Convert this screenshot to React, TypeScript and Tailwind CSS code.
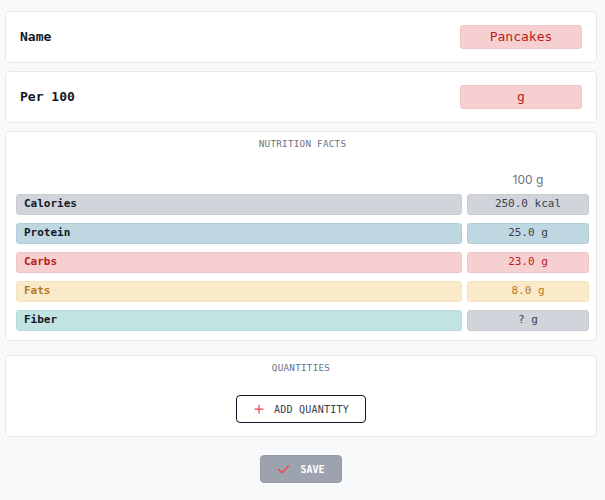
import { FC } from "react";

const mono = { fontFamily: '"DejaVu Sans Mono", "Liberation Mono", monospace' };

type Nutrient = {
  label: string;
  value: string;
  labelClass: string;
  valueClass: string;
};

const nutrients: Nutrient[] = [
  {
    label: "Calories",
    value: "250.0 kcal",
    labelClass: "bg-[#d1d5db] text-[#111827] border-[#c9cdd3]",
    valueClass: "bg-[#d1d5db] text-[#374151] border-[#c9cdd3]",
  },
  {
    label: "Protein",
    value: "25.0 g",
    labelClass: "bg-[#bfd7e0] text-[#111827] border-[#b3ced8]",
    valueClass: "bg-[#bfd7e0] text-[#374151] border-[#b3ced8]",
  },
  {
    label: "Carbs",
    value: "23.0 g",
    labelClass: "bg-[#f6d0d0] text-[#b91c1c] border-[#f0c4c4]",
    valueClass: "bg-[#f6d0d0] text-[#b91c1c] border-[#f0c4c4]",
  },
  {
    label: "Fats",
    value: "8.0 g",
    labelClass: "bg-[#fbeac9] text-[#b7791f] border-[#f6e2bc]",
    valueClass: "bg-[#fbeac9] text-[#b7791f] border-[#f6e2bc]",
  },
  {
    label: "Fiber",
    value: "? g",
    labelClass: "bg-[#c1e3e1] text-[#111827] border-[#b6dbd9]",
    valueClass: "bg-[#d1d5db] text-[#374151] border-[#c9cdd3]",
  },
];

const FieldRow: FC<{ label: string; value: string; bold?: boolean }> = ({
  label,
  value,
  bold,
}) => (
  <div className="bg-white border border-[#e5e7eb] rounded-[4px] flex items-center justify-between pl-[14px] pr-[14px] py-[13px]">
    <span className={`text-[13px] text-[#111827] ${bold ? "font-bold" : "font-semibold"}`}>
      {label}
    </span>
    <div className="w-[122px] h-[24px] rounded-[3px] bg-[#f6d0d0] border border-[#f0c6c6] flex items-center justify-center text-[13px] text-[#b91c1c]">
      {value}
    </div>
  </div>
);

const App: FC = () => {
  return (
    <div
      className="min-h-[500px] bg-[#f8f9fb] pt-[11px] pl-[5px] pr-[8px] pb-4 flex flex-col"
      style={mono}
    >
      <div className="flex flex-col gap-[8px]">
        <FieldRow label="Name" value="Pancakes" bold />
        <FieldRow label="Per 100" value="g" />

        <section className="bg-white border border-[#e5e7eb] rounded-[4px] pl-[10px] pr-[7px] pt-[6px] pb-[9px]">
          <h3 className="text-center text-[9.3px] text-[#6b7280] tracking-wide leading-[12px]">
            NUTRITION FACTS
          </h3>
          <div className="flex justify-end mt-[22px] mb-[6px]">
            <span
              className="w-[122px] text-center text-[12px] text-[#6b7280] leading-[16px]"
              style={{ fontFamily: '"Inter", "Noto Sans", sans-serif' }}
            >
              100 g
            </span>
          </div>
          <div className="flex flex-col gap-[8px]">
            {nutrients.map((n) => (
              <div key={n.label} className="flex gap-[5px] h-[21px]">
                <div
                  className={`flex-1 flex items-center pl-[7px] rounded-[3px] border text-[11px] font-bold ${n.labelClass}`}
                >
                  {n.label}
                </div>
                <div
                  className={`w-[122px] flex items-center justify-center rounded-[3px] border text-[11px] ${n.valueClass}`}
                >
                  {n.value}
                </div>
              </div>
            ))}
          </div>
        </section>
      </div>

      <section className="mt-[14px] bg-white border border-[#e5e7eb] rounded-[4px] pt-[6px] pb-[13px] flex flex-col items-center">
        <h3 className="text-[9.3px] text-[#6b7280] tracking-wide leading-[12px]">
          QUANTITIES
        </h3>
        <button className="mt-[21px] w-[130px] h-[28px] border border-[#111827] rounded-[4px] bg-white flex items-center justify-center gap-[9px] text-[10px] text-[#374151] tracking-wide">
          <svg
            width="12"
            height="12"
            viewBox="0 0 24 24"
            fill="none"
            stroke="#ef4444"
            strokeWidth="2.5"
            strokeLinecap="round"
          >
            <path d="M12 4v16" />
            <path d="M4 12h16" />
          </svg>
          <span>ADD QUANTITY</span>
        </button>
      </section>

      <div className="flex justify-center mt-[18px]">
        <button className="w-[82px] h-[28px] rounded-[4px] bg-[#9ca3af] border border-[#959ba6] flex items-center justify-center gap-[10px] text-[10px] font-bold text-white">
          <svg
            width="13"
            height="13"
            viewBox="0 0 24 24"
            fill="none"
            stroke="#ef4444"
            strokeWidth="2.5"
            strokeLinecap="round"
            strokeLinejoin="round"
          >
            <path d="M3 12l6 6L21 6" />
          </svg>
          <span>SAVE</span>
        </button>
      </div>
    </div>
  );
};

export default App;
